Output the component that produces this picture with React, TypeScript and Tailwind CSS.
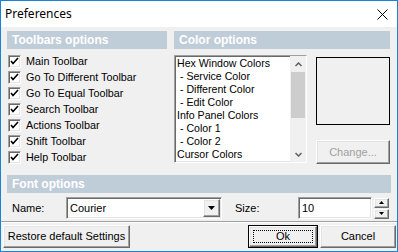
import React from 'react';

const toolbars = [
  'Main Toolbar',
  'Go To Different Toolbar',
  'Go To Equal Toolbar',
  'Search Toolbar',
  'Actions Toolbar',
  'Shift Toolbar',
  'Help Toolbar',
];

const colorItems = [
  'Hex Window Colors',
  ' - Service Color',
  ' - Different Color',
  ' - Edit Color',
  'Info Panel Colors',
  ' - Color 1',
  ' - Color 2',
  'Cursor Colors',
];

const raised =
  'bg-[#f0f0f0] border-t border-l border-t-white border-l-white border-r border-b border-r-[#696969] border-b-[#696969] shadow-[inset_-1px_-1px_0_#a0a0a0,inset_1px_1px_0_#e3e3e3]';
const sunken =
  'bg-white border-t border-l border-t-[#a0a0a0] border-l-[#a0a0a0] border-r border-b border-r-white border-b-white shadow-[inset_1px_1px_0_#696969,inset_-1px_-1px_0_#e3e3e3]';

const Header = ({ title }: { title: string }) => (
  <div className="h-[18px] bg-[#bfcdd9] flex items-center pl-[5px] text-white font-bold text-[12px] leading-none">
    {title}
  </div>
);

const CheckBox = () => (
  <div className={`w-[13px] h-[13px] ${sunken} flex items-center justify-center`}>
    <svg width="9" height="9" viewBox="0 0 9 9">
      <path d="M1 4 L3 6.5 L8 1" stroke="#000" strokeWidth="1.6" fill="none" />
    </svg>
  </div>
);

const App: React.FC = () => {
  return (
    <div
      className="w-[398px] h-[252px] border border-[#1883d7] bg-[#f0f0f0] flex flex-col overflow-hidden text-black"
      style={{ fontFamily: '"Liberation Sans", Arial, sans-serif' }}
    >
      {/* Title bar */}
      <div className="h-[26px] bg-white flex items-center justify-between pl-[4px] pr-[9px] shrink-0">
        <span className="text-[12px] text-black" style={{ fontFamily: '"Noto Sans", sans-serif' }}>
          Preferences
        </span>
        <svg width="11" height="11" viewBox="0 0 11 11">
          <path d="M0.5 0.5 L10.5 10.5 M10.5 0.5 L0.5 10.5" stroke="#000" strokeWidth="1" />
        </svg>
      </div>

      {/* Main area */}
      <div className="h-[195px] shrink-0 border-b border-b-[#a0a0a0] px-[6px] pt-[4px] flex flex-col">
        <div className="flex gap-[7px]">
          {/* Toolbars options */}
          <div className="w-[160px]">
            <Header title="Toolbars options" />
            <div className="mt-[6px] flex flex-col pl-[1px]">
              {toolbars.map((t) => (
                <div key={t} className="h-[16px] flex items-start gap-[5px]">
                  <CheckBox />
                  <span className="text-[10.8px] leading-[13px]">{t}</span>
                </div>
              ))}
            </div>
          </div>

          {/* Color options */}
          <div className="w-[216px]">
            <Header title="Color options" />
            <div className="mt-[6px] flex">
              <div className={`w-[133px] h-[108px] ${sunken} flex overflow-hidden`}>
                <div className="flex-1 pt-[1px] pl-[2px] overflow-hidden">
                  {colorItems.map((c, i) => (
                    <div key={i} className="h-[13px] text-[10.6px] leading-[13px] whitespace-pre">
                      {c}
                    </div>
                  ))}
                </div>
                <div className="w-[16px] flex flex-col bg-[#f0f0f0]">
                  <div className="h-[16px] flex items-center justify-center">
                    <svg width="7" height="5" viewBox="0 0 7 5">
                      <path d="M0.5 4 L3.5 1 L6.5 4" stroke="#606060" strokeWidth="1.5" fill="none" />
                    </svg>
                  </div>
                  <div className="h-[46px] bg-[#cdcdcd] mx-[1px]" />
                  <div className="flex-1" />
                  <div className="h-[16px] flex items-center justify-center">
                    <svg width="7" height="5" viewBox="0 0 7 5">
                      <path d="M0.5 1 L3.5 4 L6.5 1" stroke="#606060" strokeWidth="1.5" fill="none" />
                    </svg>
                  </div>
                </div>
              </div>
              <div className="ml-[9px] w-[74px] flex flex-col">
                <div className="mt-[2px] h-[68px] border border-black bg-[#f0f0f0]" />
                <div
                  className={`mt-[15px] h-[24px] ${raised} flex items-center justify-center text-[11px] text-[#a0a0a0]`}
                >
                  Change...
                </div>
              </div>
            </div>
          </div>
        </div>

        {/* Font options */}
        <div className="mt-[8px]">
          <Header title="Font options" />
        </div>
        <div className="mt-[4px] h-[22px] flex items-center">
          <span className="w-[59px] pl-[5px] text-[11px]">Name:</span>
          <div className={`w-[156px] h-[22px] ${sunken} flex items-center`}>
            <span className="flex-1 pl-[3px] text-[11px]">Courier</span>
            <div className={`w-[17px] h-[18px] mr-[1px] ${raised} flex items-center justify-center`}>
              <svg width="7" height="4" viewBox="0 0 7 4">
                <path d="M0 0 L7 0 L3.5 4 Z" fill="#000" />
              </svg>
            </div>
          </div>
          <span className="ml-[13px] w-[63px] text-[11px]">Size:</span>
          <div className={`w-[74px] h-[22px] ${sunken} flex items-center pl-[3px] text-[11px]`}>10</div>
          <div className="ml-[2px] w-[15px] h-[21px] flex flex-col gap-[1px]">
            <div className={`h-[10px] ${raised} flex items-center justify-center`}>
              <svg width="5" height="3" viewBox="0 0 5 3">
                <path d="M0 3 L5 3 L2.5 0 Z" fill="#000" />
              </svg>
            </div>
            <div className={`h-[10px] ${raised} flex items-center justify-center`}>
              <svg width="5" height="3" viewBox="0 0 5 3">
                <path d="M0 0 L5 0 L2.5 3 Z" fill="#000" />
              </svg>
            </div>
          </div>
        </div>
      </div>

      {/* Bottom buttons */}
      <div className="flex-1 border-t border-t-white flex items-start pt-[2px] px-[1px]">
        <div className={`ml-[1px] w-[127px] h-[23px] ${raised} flex items-center justify-center text-[11px]`}>
          Restore default Settings
        </div>
        <div className="flex-1" />
        <div className="w-[70px] h-[23px] border border-black">
          <div className={`w-full h-full ${raised} flex items-center justify-center p-[3px]`}>
            <div className="w-full h-full border border-dotted border-black flex items-center justify-center text-[11px]">
              Ok
            </div>
          </div>
        </div>
        <div className={`ml-[2px] w-[76px] h-[23px] ${raised} flex items-center justify-center text-[11px]`}>
          Cancel
        </div>
      </div>
    </div>
  );
};

export default App;
